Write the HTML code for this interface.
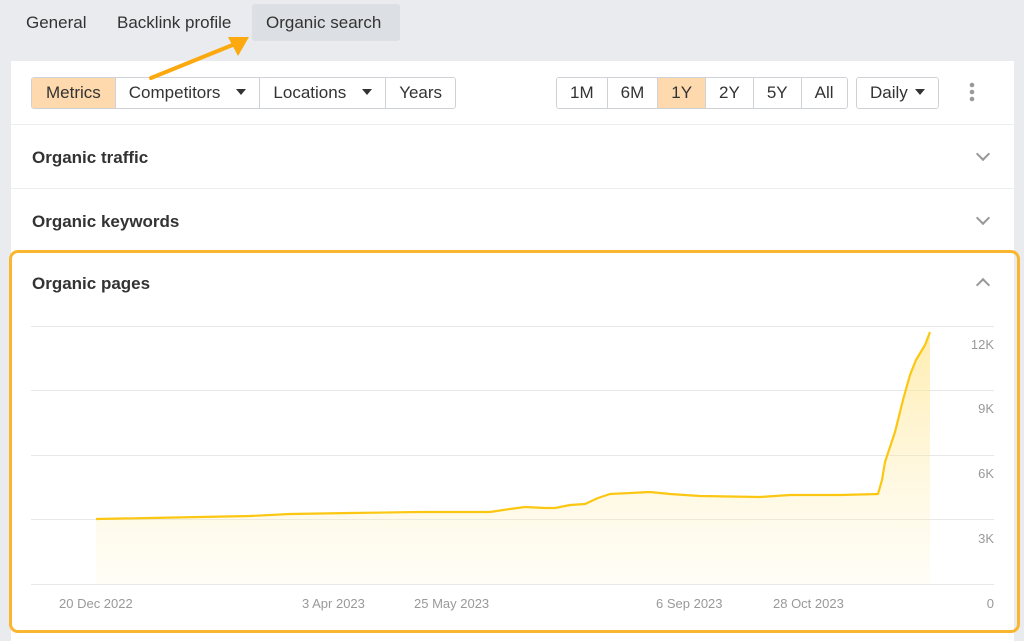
<!DOCTYPE html>
<html><head><style>
*{box-sizing:border-box;margin:0;padding:0}
body{width:1024px;height:639px;background:#e9ebee;font-family:"Liberation Sans",Arial,sans-serif;position:relative;overflow:hidden;color:#333}
.tab{position:absolute;top:4px;height:37px;line-height:37px;font-size:17px;color:#333;padding:0 14px}
.panel{position:absolute;left:11px;top:61px;width:1003px;height:580px;background:#fff}
.grp{position:absolute;top:77px;height:32px;display:flex;border:1px solid #cfd2d6;border-radius:3px;overflow:hidden}
.grp div{height:30px;line-height:30px;font-size:17px;padding:0 13px;border-right:1px solid #cfd2d6;background:#fff;color:#333}
.grp div:last-child{border-right:none}
.grp .on{background:#fdd9ad}
.tri{display:inline-block;width:0;height:0;border-left:5px solid transparent;border-right:5px solid transparent;border-top:6px solid #333;margin-left:16px;vertical-align:3px}
.row{position:absolute;left:11px;width:1003px;border-top:1px solid #eceef0}
.row h3{position:absolute;left:21px;font-size:17px;font-weight:bold;color:#333}
.chev{position:absolute;width:10px;height:10px;border-right:2px solid #999;border-bottom:2px solid #999}
.grid{position:absolute;left:31px;width:963px;height:1px;background:#e6e8ea}
.yl{position:absolute;right:30px;font-size:13px;color:#999;text-align:right}
.xl{position:absolute;top:596px;font-size:13px;color:#999}
</style></head><body>
<div class="tab" style="left:12px">General</div>
<div class="tab" style="left:103px">Backlink profile</div>
<div class="tab" style="left:252px;background:#dcdfe3;border-radius:3px;width:148px">Organic search</div>
<div class="panel"></div>
<div class="grp" style="left:31px"><div class="on" style="padding:0 14px">Metrics</div><div>Competitors<span class="tri"></span></div><div>Locations<span class="tri"></span></div><div>Years</div></div>
<div class="grp" style="left:556px"><div>1M</div><div>6M</div><div class="on">1Y</div><div>2Y</div><div>5Y</div><div>All</div></div>
<div class="grp" style="left:856px"><div style="padding:0 13px">Daily<span class="tri" style="margin-left:7px"></span></div></div>
<svg style="position:absolute;left:966px;top:82px" width="12" height="22"><circle cx="6" cy="3" r="2.3" fill="#999"/><circle cx="6" cy="10" r="2.3" fill="#999"/><circle cx="6" cy="17" r="2.3" fill="#999"/></svg>
<svg style="position:absolute;left:0;top:0" width="260" height="90"><line x1="151" y1="78" x2="235" y2="44" stroke="#fba90f" stroke-width="4" stroke-linecap="round"/><polygon points="249,37 228,37 238,56" fill="#fba90f"/></svg>
<div class="row" style="top:124px;height:64px"><h3 style="top:23px">Organic traffic</h3><div class="chev" style="left:967px;top:24px;transform:rotate(45deg)"></div></div>
<div class="row" style="top:188px;height:62px"><h3 style="top:23px">Organic keywords</h3><div class="chev" style="left:967px;top:24px;transform:rotate(45deg)"></div></div>
<div style="position:absolute;left:9px;top:250px;width:1011px;height:383px;border:3px solid #fbb630;border-radius:9px"></div>
<div style="position:absolute;left:32px;top:274px;font-size:17px;font-weight:bold;color:#333">Organic pages</div>
<div class="chev" style="left:978px;top:280px;transform:rotate(-135deg)"></div>
<div class="grid" style="top:326px"></div><div class="grid" style="top:390px"></div><div class="grid" style="top:455px"></div><div class="grid" style="top:519px"></div><div class="grid" style="top:584px"></div>
<div class="yl" style="top:337px">12K</div><div class="yl" style="top:401px">9K</div><div class="yl" style="top:466px">6K</div><div class="yl" style="top:531px">3K</div><div class="yl" style="top:596px">0</div>
<div class="xl" style="left:59px">20 Dec 2022</div><div class="xl" style="left:302px">3 Apr 2023</div><div class="xl" style="left:414px">25 May 2023</div><div class="xl" style="left:656px">6 Sep 2023</div><div class="xl" style="left:773px">28 Oct 2023</div>
<svg style="position:absolute;left:0;top:0" width="1024" height="639">
<defs><linearGradient id="g" x1="0" y1="0" x2="0" y2="1"><stop offset="0" stop-color="#ffe07a" stop-opacity=".6"/><stop offset="1" stop-color="#fff3c4" stop-opacity=".15"/></linearGradient></defs>
<path d="M96,519 L150,518 L250,516 L290,514 L350,513 L420,512 L490,512 L510,509 L525,507 L545,508 L555,508 L570,505 L585,504 L598,498 L610,494 L650,492 L670,494 L700,496 L760,497 L790,495 L840,495 L878,494 L882,480 L885,462 L895,432 L903,400 L910,375 L916,360 L925,345 L930,332 L930,584 L96,584 Z" fill="url(#g)"/>
<path d="M96,519 L150,518 L250,516 L290,514 L350,513 L420,512 L490,512 L510,509 L525,507 L545,508 L555,508 L570,505 L585,504 L598,498 L610,494 L650,492 L670,494 L700,496 L760,497 L790,495 L840,495 L878,494 L882,480 L885,462 L895,432 L903,400 L910,375 L916,360 L925,345 L930,332" fill="none" stroke="#fbc712" stroke-width="2.2" stroke-linejoin="round"/>
</svg>
</body></html>
